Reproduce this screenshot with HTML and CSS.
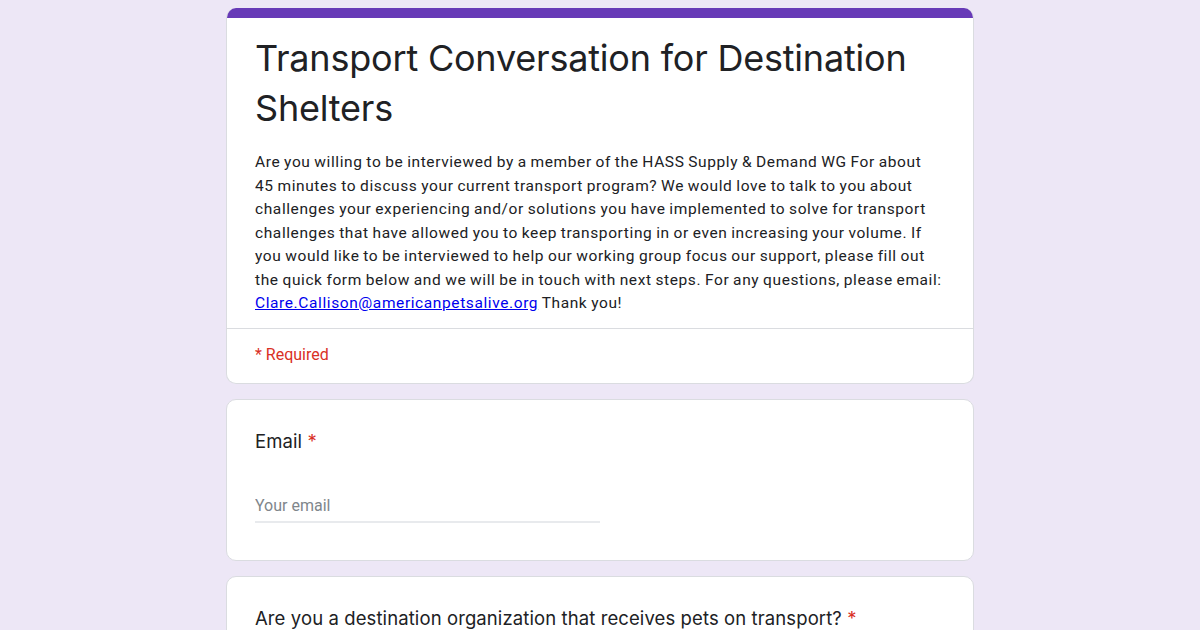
FILE: index.html
```html
<!DOCTYPE html>
<html lang="en">
<head>
  <meta charset="UTF-8">
  <title>Transport Conversation for Destination Shelters</title>
  <link rel="stylesheet" href="styles.css">
</head>
<body>
  <div class="form">
    <div class="card header-card">
      <div class="accent"></div>
      <div class="header-body">
        <h1 class="title">Transport Conversation for Destination Shelters</h1>
        <div class="description">Are you willing to be interviewed by a member of the HASS Supply &amp; Demand WG For about<br>
          45 minutes to discuss your current transport program? We would love to talk to you about<br>
          challenges your experiencing and/or solutions you have implemented to solve for transport<br>
          challenges that have allowed you to keep transporting in or even increasing your volume. If<br>
          you would like to be interviewed to help our working group focus our support, please fill out<br>
          the quick form below and we will be in touch with next steps. For any questions, please email:<br>
          <a href="#">Clare.Callison@americanpetsalive.org</a> Thank you!</div>
      </div>
      <div class="required-note">* Required</div>
    </div>

    <div class="card question">
      <div class="question-title">Email <span class="star">*</span></div>
      <div class="text-input">
        <input type="text" placeholder="Your email">
      </div>
    </div>

    <div class="card question">
      <div class="question-title">Are you a destination organization that receives pets on transport? <span class="star">*</span></div>
    </div>
  </div>
</body>
</html>
```

FILE: styles.css
```css
body {
  margin: 0;
  background: #ede7f6;
  font-family: Roboto, "Liberation Sans", sans-serif;
  color: #202124;
}
.form {
  width: 748px;
  margin: 0 auto;
  padding-top: 8px;
  display: flex;
  flex-direction: column;
  gap: 15px;
}
.card {
  background: #fff;
  border: 1px solid #dadce0;
  border-radius: 10px;
  overflow: hidden;
}
.header-card {
  border-top: none;
}
.accent {
  height: 10px;
  background: #673ab7;
}
.header-body {
  padding: 15px 28px 12px;
  border-bottom: 1px solid #dadce0;
}
.title {
  margin: 0;
  font-family: Inter, "Open Sans", sans-serif;
  font-weight: 400;
  font-size: 36px;
  line-height: 50px;
  letter-spacing: -0.2px;
}
.description {
  margin-top: 18px;
  font-size: 15.5px;
  line-height: 23.5px;
  letter-spacing: 0.6px;
  word-spacing: -0.6px;
  white-space: nowrap;
}
.description a {
  color: #0000ee;
}
.required-note {
  padding: 16px 28px 19px;
  font-size: 16px;
  color: #d93025;
}
.question {
  padding: 27px 28px 37px;
}
.question-title {
  font-family: Inter, "Open Sans", sans-serif;
  font-size: 18.5px;
  line-height: 28px;
  letter-spacing: 0.1px;
}
.star {
  color: #d93025;
}
.text-input {
  margin-top: 41px;
  width: 345px;
  border-bottom: 2px solid #e8eaed;
}
.text-input input {
  border: none;
  outline: none;
  width: 100%;
  padding: 0 0 6px;
  font-family: Roboto, "Liberation Sans", sans-serif;
  font-size: 16px;
  background: transparent;
}
.text-input input::placeholder {
  color: #80868b;
}
```
